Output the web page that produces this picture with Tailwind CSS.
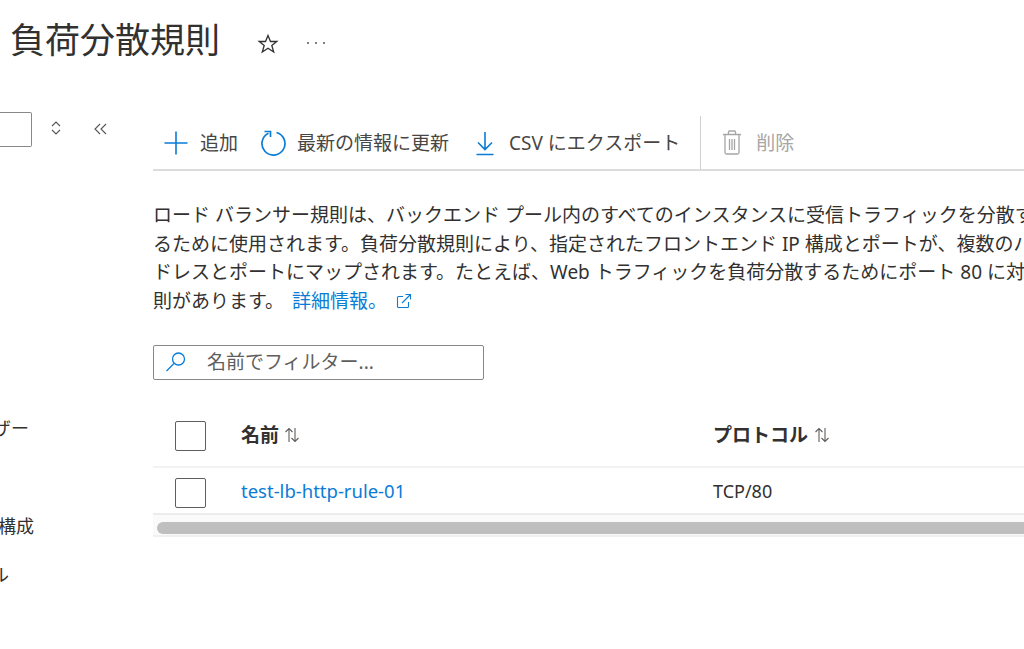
<!DOCTYPE html>
<html lang="ja">
<head>
<meta charset="utf-8">
<script src="https://cdn.jsdelivr.net/npm/@tailwindcss/browser@4"></script>
</head>
<body class="bg-white">
<div class="w-[1024px] h-[649px] overflow-hidden flex flex-col text-[#323130] text-[19px] font-['Noto_Sans','Noto_Sans_CJK_JP',sans-serif]">
  <header class="h-[84px] flex items-center pl-[10px] shrink-0">
    <h1 class="text-[35px] leading-[40px] font-normal w-[215px] whitespace-nowrap -mt-[4px]">負荷分散規則</h1>
    <svg class="w-[22px] h-[22px] ml-[32px] mt-[3px]" viewBox="0 0 22 22" fill="none" stroke="#323130" stroke-width="1.3"><path d="M11 2.5l2.5 6h6.3l-5 4 1.900 6.500L11 15.200 5.300 19l1.900-6.500-5-4h6.300z"/></svg>
    <svg class="w-[20px] h-[6px] ml-[27px] mt-[2px]" viewBox="0 0 20 6" fill="#555"><circle cx="2" cy="3" r="1"/><circle cx="10" cy="3" r="1"/><circle cx="18" cy="3" r="1"/></svg>
  </header>
  <div class="flex flex-1 min-h-0">
    <aside class="w-[153px] shrink-0 relative">
      <div class="flex items-center h-[36px] mt-[27px]">
        <div class="w-[32px] h-[35px] border border-[#8a8886] border-l-0 rounded-r-[2px]"></div>
        <svg class="w-[12px] h-[16px] ml-[18px] -mt-[2px]" viewBox="0 0 12 16" fill="none" stroke="#555" stroke-width="1.1"><path d="M2 6l4-4 4 4M2 10l4 4 4-4"/></svg>
        <svg class="w-[14px] h-[12px] ml-[32px] -mt-[1px]" viewBox="0 0 14 12" fill="none" stroke="#555" stroke-width="1.1"><path d="M6 1L1 6l5 5M12 1L7 6l5 5"/></svg>
      </div>
      <div class="absolute left-0 top-[332px] w-[29px] overflow-hidden flex justify-end text-[18px] leading-[24px] whitespace-nowrap">ユーザー</div>
      <div class="absolute left-0 top-[430px] w-[34px] overflow-hidden flex justify-end text-[18px] leading-[24px] whitespace-nowrap">IP 構成</div>
      <div class="absolute left-0 top-[479px] w-[9px] overflow-hidden flex justify-end text-[18px] leading-[24px] whitespace-nowrap">ル</div>
    </aside>
    <main class="flex-1 min-w-0 overflow-hidden">
      <div class="h-[55px] mt-[32px] border-b-2 border-[#dcdcdc] flex items-center pl-[10px] text-[#484644] whitespace-nowrap">
        <div class="flex items-center h-full">
          <svg class="w-[26px] h-[26px]" viewBox="0 0 26 26" fill="none" stroke="#0a7cd6" stroke-width="1.6"><path d="M13 1.500v23M1.500 13h23"/></svg>
          <span class="ml-[11px] pt-[2px]">追加</span>
        </div>
        <div class="flex items-center ml-[22px] h-full">
          <svg class="w-[26px] h-[26px]" viewBox="0 0 26 26" fill="none" stroke="#0a7cd6" stroke-width="1.7"><path d="M8.500 3.200A11.500 11.500 0 1 0 16.500 2.500"/><path d="M4.500 1.500H10.500V7"/></svg>
          <span class="ml-[11px] pt-[2px]">最新の情報に更新</span>
        </div>
        <div class="flex items-center ml-[24px] h-full">
          <svg class="w-[24px] h-[26px]" viewBox="0 0 24 26" fill="none" stroke="#0a7cd6" stroke-width="1.6"><path d="M12 2v17M5 12.500l7 7 7-7M3.500 24.500h17"/></svg>
          <span class="ml-[12px] pt-[2px]">CSV にエクスポート</span>
        </div>
        <div class="w-px h-[53px] bg-[#d0d0d0] ml-[20px] self-start"></div>
        <div class="flex items-center ml-[21px] h-full">
          <svg class="w-[20px] h-[25px]" viewBox="0 0 20 25" fill="none" stroke="#a6a6a6" stroke-width="1.3"><path d="M1 4.500h18M6.500 4.500V2a1 1 0 0 1 1-1h5a1 1 0 0 1 1 1v2.500M3 4.500V22.500a1.500 1.500 0 0 0 1.500 1.500h11a1.500 1.500 0 0 0 1.500-1.500V4.500M7.500 9v11M10 9v11M12.500 9v11"/></svg>
          <span class="ml-[14px] pt-[2px] text-[#a6a6a6]">削除</span>
        </div>
      </div>
      <p class="mt-[30px] leading-[28.7px] whitespace-nowrap text-[#323130]">ロード バランサー規則は、バックエンド プール内のすべてのインスタンスに受信トラフィックを分散す<br>るために使用されます。負荷分散規則により、指定されたフロントエンド IP 構成とポートが、複数のバックエンド IP ア<br>ドレスとポートにマップされます。たとえば、Web トラフィックを負荷分散するためにポート 80 に対応する規<br>則があります。<a class="text-[#0a7cd6] ml-[8px]">詳細情報。</a><svg class="inline-block w-[16px] h-[16px] ml-[9px] -mt-[5px]" viewBox="0 0 16 16" fill="none" stroke="#0a7cd6" stroke-width="1.1"><path d="M7 3.500H2.500a1 1 0 0 0-1 1v9a1 1 0 0 0 1 1h9a1 1 0 0 0 1-1V9M6 10l8.500-8.500M9.500 1.500h5v5"/></svg></p>
      <div class="mt-[29px] w-[331px] h-[35px] border border-[#8a8886] rounded-[2px] flex items-center pl-[11px] text-[#605e5c]">
        <svg class="w-[22px] h-[22px]" viewBox="0 0 22 22" fill="none" stroke="#0a7cd6" stroke-width="1.3"><circle cx="13.500" cy="8" r="6"/><path d="M9 12.500L1.500 20"/></svg>
        <span class="ml-[20px]">名前でフィルター...</span>
      </div>
      <div class="w-[1100px] mt-[27px]">
        <div class="h-[61px] flex items-center border-b-2 border-[#f2f2f2] font-bold">
          <div class="w-[88px] pl-[22px] shrink-0"><div class="w-[31px] h-[30px] border-[1.5px] border-[#605e5c] rounded-[2px]"></div></div>
          <div class="w-[472px] shrink-0 flex items-center -mt-[2px]">名前<svg class="w-[16px] h-[16px] ml-[5px]" viewBox="0 0 16 16" fill="none" stroke="#605e5c" stroke-width="1.100"><path d="M5 15V1.500M1.500 5L5 1.500 8.500 5M11 1v13.500M7.500 11l3.500 3.500 3.500-3.500"/></svg></div>
          <div class="flex items-center -mt-[2px]">プロトコル<svg class="w-[16px] h-[16px] ml-[6px]" viewBox="0 0 16 16" fill="none" stroke="#605e5c" stroke-width="1.100"><path d="M5 15V1.500M1.500 5L5 1.500 8.500 5M11 1v13.500M7.500 11l3.500 3.500 3.500-3.500"/></svg></div>
        </div>
        <div class="h-[47px] flex items-center border-b-2 border-[#ececec]">
          <div class="w-[88px] pl-[22px] shrink-0 mt-[6px]"><div class="w-[31px] h-[30px] border-[1.5px] border-[#605e5c] rounded-[2px]"></div></div>
          <div class="w-[472px] shrink-0 text-[#0a7cd6] text-[18.5px] pt-[2px]">test-lb-http-rule-01</div>
          <div class="text-[18px] pt-[2px]">TCP/80</div>
        </div>
        <div class="h-[22px] border-b-2 border-[#f0f0f0] flex items-center pl-[4px] bg-[#fafafa]">
          <div class="w-full h-[12px] mt-[6px] bg-[#bfbfbf] rounded-l-full"></div>
        </div>
      </div>
    </main>
  </div>
</div>
</body>
</html>
